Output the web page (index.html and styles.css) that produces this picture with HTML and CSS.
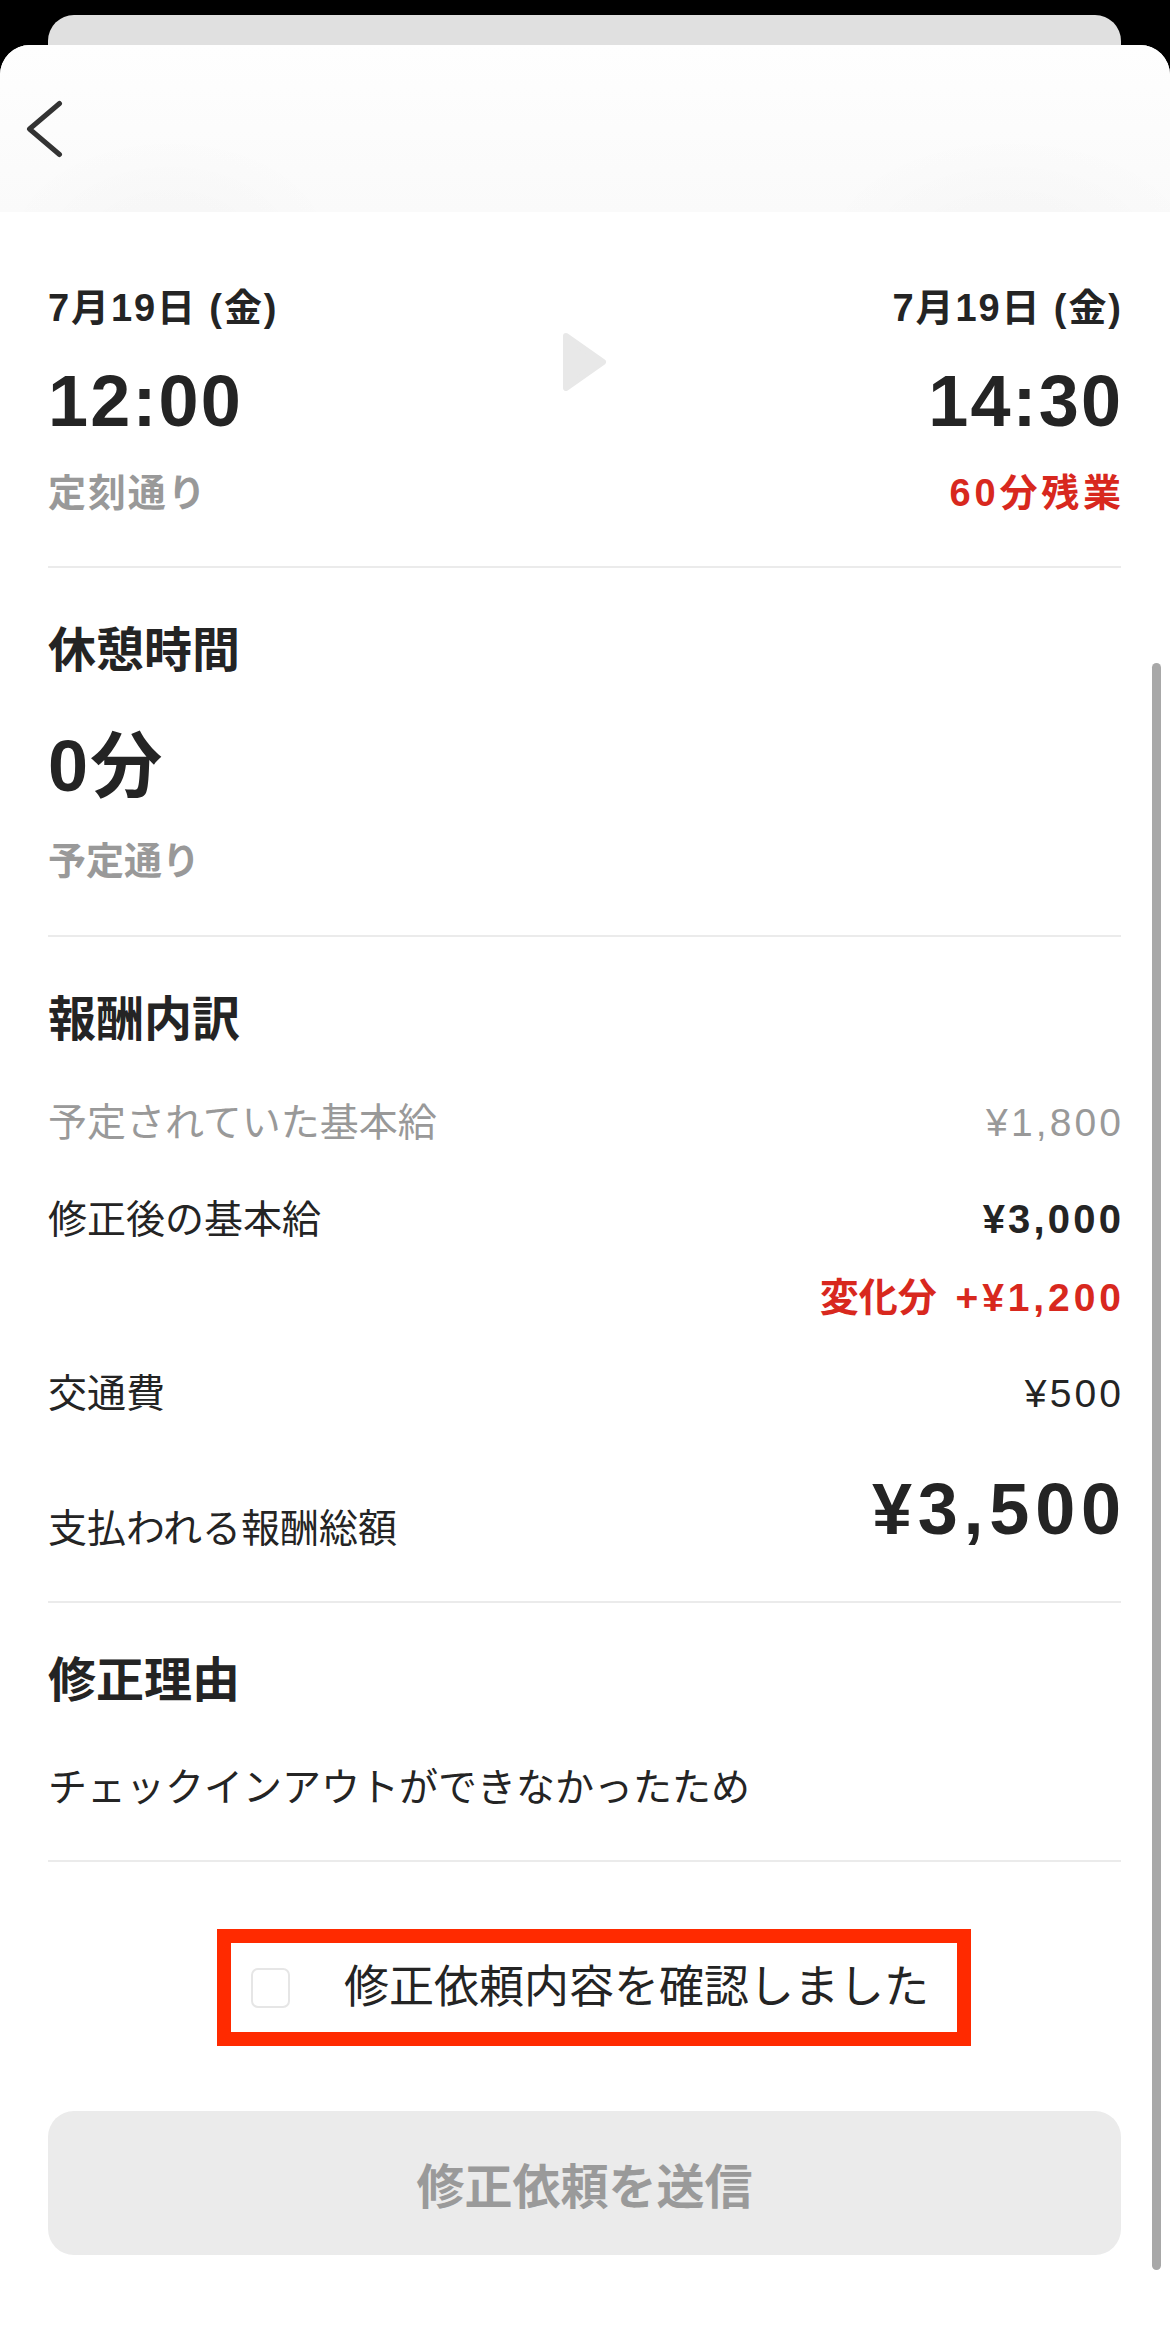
FILE: index.html
```html
<!DOCTYPE html>
<html lang="ja">
<head>
<meta charset="utf-8">
<title>修正依頼</title>
<link rel="stylesheet" href="styles.css">
</head>
<body>
<div class="backcard"></div>
<main class="sheet">
  <header class="nav">
    <svg class="back" viewBox="0 0 40 60" aria-hidden="true">
      <polyline points="33.5,4.5 3.5,30 33.5,55.5" fill="none" stroke="#333" stroke-width="5" stroke-linecap="round" stroke-linejoin="round"/>
    </svg>
  </header>

  <div class="content">
    <section class="times">
      <div class="col">
        <div class="date">7月19日 (金)</div>
        <div class="time">12:00</div>
        <div class="sub">定刻通り</div>
      </div>
      <svg class="arrow" viewBox="0 0 44 58" aria-hidden="true">
        <polygon points="3,3 40,29 3,55" fill="#e8e8e8" stroke="#e8e8e8" stroke-width="6" stroke-linejoin="round"/>
      </svg>
      <div class="col right">
        <div class="date">7月19日 (金)</div>
        <div class="time">14:30</div>
        <div class="sub red">60分残業</div>
      </div>
    </section>

    <hr class="divider">

    <section class="block break">
      <h2 class="heading">休憩時間</h2>
      <div class="big">0分</div>
      <div class="note">予定通り</div>
    </section>

    <hr class="divider">

    <section class="block pay">
      <h2 class="heading">報酬内訳</h2>
      <div class="row muted">
        <span>予定されていた基本給</span>
        <span class="amt">¥1,800</span>
      </div>
      <div class="row">
        <span>修正後の基本給</span>
        <span class="amt bold">¥3,000</span>
      </div>
      <div class="delta"><span class="delta-label">変化分</span> <span class="amt">+¥1,200</span></div>
      <div class="row after-delta">
        <span>交通費</span>
        <span class="amt">¥500</span>
      </div>
      <div class="row total">
        <span>支払われる報酬総額</span>
        <span class="amt total-amt">¥3,500</span>
      </div>
    </section>

    <hr class="divider">

    <section class="block reason">
      <h2 class="heading">修正理由</h2>
      <p class="reason-text">チェックインアウトができなかったため</p>
    </section>

    <hr class="divider">

    <div class="confirm">
      <label class="mark">
        <span class="checkbox"></span>
        <span class="confirm-text">修正依頼内容を確認しました</span>
      </label>
    </div>

    <button class="submit" type="button">修正依頼を送信</button>
  </div>

  <div class="scrollbar"></div>
</main>
</body>
</html>
```

FILE: styles.css
```css
html, body {
  margin: 0;
  padding: 0;
  background: #000;
}

body {
  font-family: "Liberation Sans", "Noto Sans CJK JP", sans-serif;
  color: #242424;
}

.backcard {
  height: 30px;
  margin: 15px 49px 0 48px;
  background: #e0e0e0;
  border-radius: 26px 26px 0 0;
}

.sheet {
  position: relative;
  background: #fff;
  border-radius: 30px 30px 0 0;
  min-height: 2293px;
  overflow: hidden;
}

.nav {
  height: 167px;
  display: flex;
  align-items: center;
  padding-left: 26px;
  background:
    radial-gradient(ellipse 230px 150px at 170px 200px, rgba(0, 0, 0, 0.02), rgba(0, 0, 0, 0) 75%),
    radial-gradient(ellipse 260px 150px at 1010px 200px, rgba(0, 0, 0, 0.02), rgba(0, 0, 0, 0) 75%),
    linear-gradient(#fefefe, #fafafa);
}

.back {
  display: block;
  width: 40px;
  height: 60px;
}

.content {
  padding: 0 49px 0 48px;
}

/* times */
.times {
  display: grid;
  grid-template-columns: 1fr auto 1fr;
  padding: 73px 0 50px;
}

.right {
  text-align: right;
}

.date {
  font-size: 38px;
  line-height: 46px;
  font-weight: 700;
  letter-spacing: 0.05em;
}

.right .date {
  margin-right: -0.05em;
}

.time {
  margin-top: 27px;
  font-size: 72px;
  line-height: 86px;
  font-weight: 700;
  letter-spacing: 0.03em;
}

.right .time {
  margin-right: -0.03em;
}

.sub {
  margin-top: 26px;
  font-size: 38px;
  line-height: 46px;
  font-weight: 700;
  color: #999;
  letter-spacing: 0.05em;
}

.sub.red {
  color: #d8281e;
  letter-spacing: 0.1em;
  margin-right: -0.1em;
}

.arrow {
  display: block;
  width: 44px;
  height: 58px;
  margin-top: 48px;
}

.divider {
  display: block;
  height: 2px;
  margin: 0;
  border: 0;
  background: #ebebeb;
}

/* generic blocks */
.heading {
  margin: 0;
  font-size: 48px;
  line-height: 58px;
  font-weight: 700;
}

.break {
  padding: 54px 0 51px;
}

.big {
  margin-top: 43px;
  font-size: 72px;
  line-height: 86px;
  font-weight: 700;
  letter-spacing: 0.03em;
}

.note {
  margin-top: 29px;
  font-size: 38px;
  line-height: 46px;
  font-weight: 700;
  color: #999;
}

/* pay */
.pay {
  padding: 54px 0 49px;
}

.row {
  display: flex;
  justify-content: space-between;
  align-items: flex-end;
  margin-top: 50px;
  font-size: 39px;
  line-height: 47px;
}

.row.muted {
  color: #999;
}

.amt {
  letter-spacing: 0.08em;
  margin-right: -0.08em;
}

.amt.bold {
  font-size: 40px;
  font-weight: 700;
  letter-spacing: 0.08em;
  margin-right: -0.08em;
}

.delta {
  margin-top: 31px;
  text-align: right;
  font-size: 39px;
  line-height: 47px;
  font-weight: 700;
  color: #d8281e;
}

.delta .amt {
  letter-spacing: 0.1em;
  margin-right: -0.1em;
}

.delta-label {
  margin-right: 8px;
}

.row.after-delta {
  margin-top: 49px;
}

.row.total {
  margin-top: 49px;
}

.total-amt {
  font-size: 72px;
  line-height: 86px;
  font-weight: 700;
  letter-spacing: 0.08em;
  margin-right: -0.08em;
}

/* reason */
.reason {
  padding: 49px 0 49px;
}

.reason-text {
  margin: 54px 0 0;
  font-size: 39px;
  line-height: 47px;
}

/* confirm */
.confirm {
  display: flex;
  justify-content: center;
  padding-top: 67px;
}

.mark {
  display: flex;
  align-items: center;
  height: 89px;
  margin-left: 19px;
  padding: 0 28px 0 20px;
  border: 14px solid #ff2a00;
}

.checkbox {
  display: block;
  width: 39px;
  height: 40px;
  box-sizing: border-box;
  border: 2px solid #e6e6e6;
  border-radius: 7px;
  background: #fff;
}

.confirm-text {
  margin-left: 54px;
  font-size: 45px;
  line-height: 54px;
}

.submit {
  display: flex;
  align-items: center;
  justify-content: center;
  width: 100%;
  height: 144px;
  margin-top: 65px;
  padding: 0;
  border: 0;
  border-radius: 26px;
  background: #ebebeb;
  font-family: inherit;
  font-size: 48px;
  font-weight: 700;
  color: #9a9a9a;
}

.scrollbar {
  position: absolute;
  top: 618px;
  left: 1152px;
  width: 9px;
  height: 1607px;
  border-radius: 5px;
  background: #a8a8a8;
}
```
